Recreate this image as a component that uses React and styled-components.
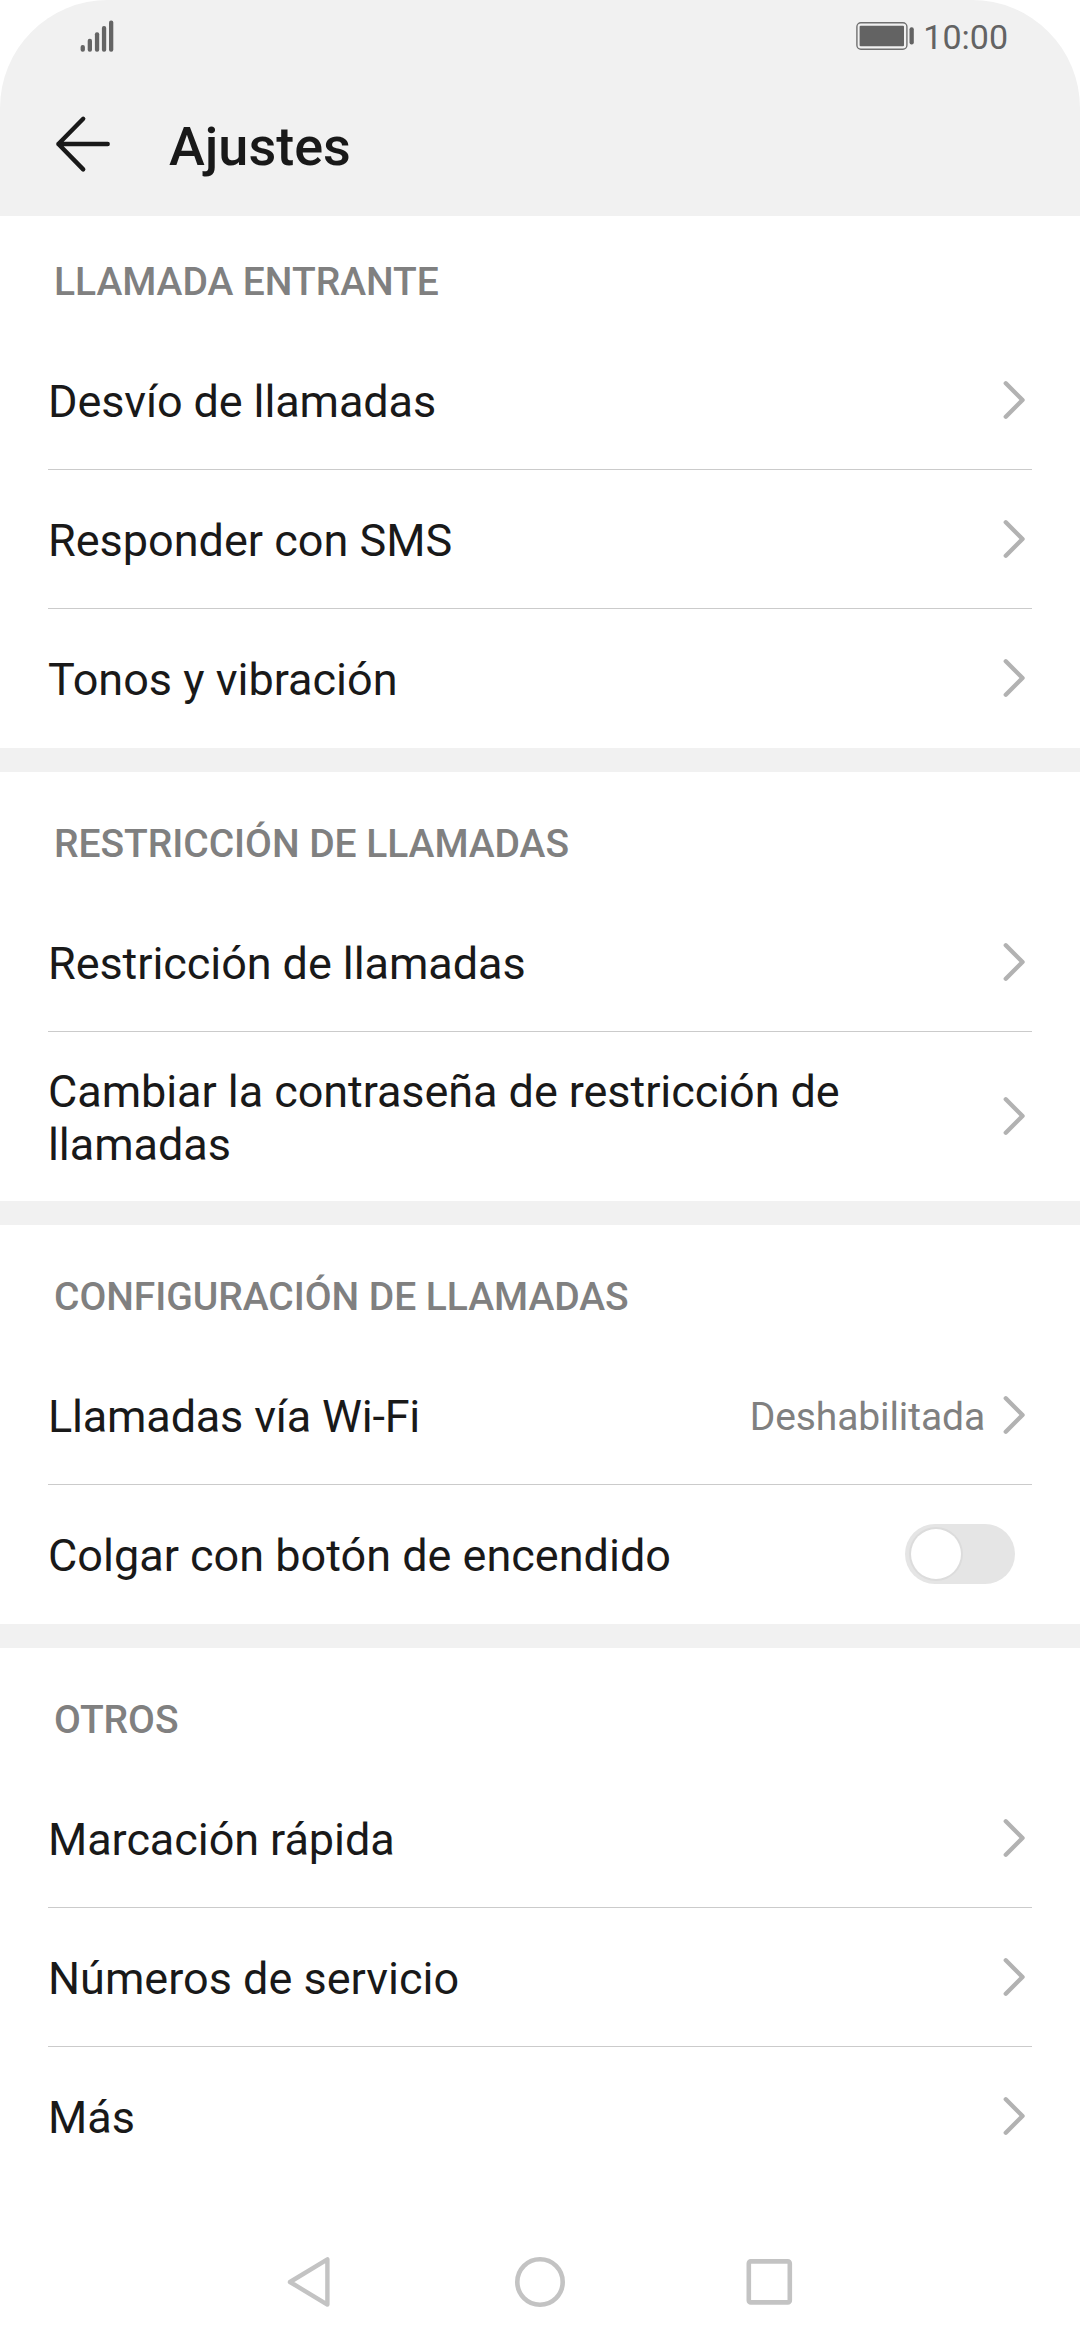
import React from 'react';
import styled, { createGlobalStyle } from 'styled-components'

const GlobalStyle = createGlobalStyle`
    body {
        margin: 0;
        background: #fff;
        font-family: Roboto, sans-serif;
        color: #191919;
    }
`

const Screen = styled.div`
    width: 1080px;
    height: 2340px;
    display: flex;
    flex-direction: column;
    background: #fff;
    overflow: hidden;
`

const Header = styled.header`
    height: 216px;
    background: #f1f1f1;
    border-radius: 108px 108px 0 0;
`

const StatusBar = styled.div`
    height: 72px;
    padding: 0 72px 0 80px;
    box-sizing: border-box;
    display: flex;
    align-items: center;
    justify-content: space-between;
`

const StatusRight = styled.div`
    display: flex;
    align-items: center;
    gap: 9.5px;
`

const Time = styled.span`
    font-size: 34px;
    line-height: 40px;
    padding-top: 2px;
    color: #636363;
`

const TitleBar = styled.div`
    height: 144px;
    padding-left: 54px;
    display: flex;
    align-items: center;
    gap: 57px;
`

const Title = styled.h1`
    margin: 0;
    padding-top: 6px;
    font-size: 54px;
    line-height: 64px;
    font-weight: 500;
`

const Section = styled.section`
    padding-top: ${props => props.$first ? '41px' : '47px'};

    & + & {
        border-top: 24px solid #f1f1f1;
    }
`

const SectionTitle = styled.h2`
    margin: 0;
    height: 74px;
    padding-left: 54px;
    font-size: 39px;
    line-height: 50px;
    font-weight: 500;
    letter-spacing: -0.05px;
    color: #808080;
`

const Row = styled.div`
    margin: 0 48px;
    min-height: 139px;
    box-sizing: border-box;
    display: flex;
    align-items: center;
    justify-content: space-between;
    border-bottom: 1px solid #cbcbcb;

    &:last-child {
        border-bottom-color: transparent;
    }
`

const Label = styled.span`
    max-width: 830px;
    padding: 32.5px 0 29.5px;
    font-size: 45px;
    line-height: 53px;
    letter-spacing: ${props => props.$tracking || 0}px;
`

const RowEnd = styled.div`
    display: flex;
    align-items: center;
    gap: 17px;
    padding-right: 6px;
`

const Value = styled.span`
    padding-top: 4px;
    font-size: 39px;
    line-height: 46px;
    letter-spacing: -0.1px;
    color: #808080;
`

const Switch = styled.div`
    width: 110px;
    height: 60px;
    margin-right: 11px;
    padding: 5px 6px;
    box-sizing: border-box;
    border-radius: 30px;
    background: #e5e5e5;
`

const Thumb = styled.div`
    width: 50px;
    height: 50px;
    border-radius: 50%;
    background: #fff;
    box-shadow: 0 0 0 2px #dcdcdc;
`

const NavBar = styled.nav`
    height: 116px;
    margin-top: auto;
    padding: 0 252px;
    display: flex;
    align-items: center;
    justify-content: space-between;
`

const SignalIcon = () => (
    <svg width="34" height="32" viewBox="0 0 34 32" fill="#646464">
        <rect x="0.6" y="25" width="4.3" height="6.7" rx="2" />
        <rect x="7.7" y="18.7" width="4.3" height="13" rx="2" />
        <rect x="14.9" y="12.3" width="4.3" height="19.4" rx="2" />
        <rect x="21.9" y="6" width="4.3" height="25.7" rx="2" />
        <rect x="29" y="0.4" width="4.3" height="31.3" rx="2" />
    </svg>
)

const BatteryIcon = () => (
    <svg width="58" height="28" viewBox="0 0 58 28" fill="#636363">
        <rect x="0.9" y="0.8" width="50" height="26.4" rx="4" fill="none" stroke="#707070" strokeWidth="1.4" />
        <rect x="3.6" y="3.8" width="44.4" height="20.4" rx="1" />
        <rect x="53.5" y="5.2" width="4.3" height="17.4" rx="2" />
    </svg>
)

const BackIcon = () => (
    <svg width="58" height="58" viewBox="0 0 58 58" fill="none" stroke="#191919" strokeWidth="4.4" strokeLinecap="round" strokeLinejoin="round">
        <path d="M53.7 29H4.4M29.2 3.8L4.4 29L29.2 54.4" />
    </svg>
)

const Chevron = () => (
    <svg width="24" height="40" viewBox="0 0 24 40" fill="none" stroke="#b2b2b2" strokeWidth="4.4" strokeLinecap="round" strokeLinejoin="round">
        <path d="M3.8 3.3L20.5 20L3.8 36.7" />
    </svg>
)

const NavBack = () => (
    <svg width="114" height="60" viewBox="0 0 114 60" fill="none" stroke="#c3c3c3" strokeWidth="4.4" strokeLinejoin="round">
        <path d="M75.4 7.4V52.6L38 30Z" />
    </svg>
)

const NavHome = () => (
    <svg width="60" height="60" viewBox="0 0 60 60" fill="none" stroke="#c3c3c3" strokeWidth="4.6">
        <circle cx="30" cy="30" r="22.7" />
    </svg>
)

const NavRecent = () => (
    <svg width="114" height="60" viewBox="0 0 114 60" fill="none" stroke="#c3c3c3" strokeWidth="4.6">
        <rect x="34.8" y="9.4" width="41" height="41" rx="2" />
    </svg>
)

const sections = [
    {
        title: 'LLAMADA ENTRANTE',
        rows: [
            { label: 'Desvío de llamadas', tracking: -0.12 },
            { label: 'Responder con SMS' },
            { label: 'Tonos y vibración' },
        ],
    },
    {
        title: 'RESTRICCIÓN DE LLAMADAS',
        rows: [
            { label: 'Restricción de llamadas', tracking: -0.07 },
            { label: 'Cambiar la contraseña de restricción de llamadas', tracking: -0.07 },
        ],
    },
    {
        title: 'CONFIGURACIÓN DE LLAMADAS',
        rows: [
            { label: 'Llamadas vía Wi-Fi', tracking: -0.19, value: 'Deshabilitada' },
            { label: 'Colgar con botón de encendido', toggle: true },
        ],
    },
    {
        title: 'OTROS',
        rows: [
            { label: 'Marcación rápida', tracking: -0.07 },
            { label: 'Números de servicio' },
            { label: 'Más' },
        ],
    },
]

const SettingsRow = ({ label, tracking, value, toggle }) => (
    <Row>
        <Label $tracking={tracking}>{label}</Label>
        <RowEnd>
            {value && <Value>{value}</Value>}
            {toggle ? <Switch><Thumb /></Switch> : <Chevron />}
        </RowEnd>
    </Row>
)

const App = () => {
    return (
        <Screen>
            <GlobalStyle />
            <Header>
                <StatusBar>
                    <SignalIcon />
                    <StatusRight>
                        <BatteryIcon />
                        <Time>10:00</Time>
                    </StatusRight>
                </StatusBar>
                <TitleBar>
                    <BackIcon />
                    <Title>Ajustes</Title>
                </TitleBar>
            </Header>

            {sections.map((section, i) => (
                <Section key={section.title} $first={i === 0}>
                    <SectionTitle>{section.title}</SectionTitle>
                    {section.rows.map(row => <SettingsRow key={row.label} {...row} />)}
                </Section>
            ))}

            <NavBar>
                <NavBack />
                <NavHome />
                <NavRecent />
            </NavBar>
        </Screen>
    )
}

export default App
